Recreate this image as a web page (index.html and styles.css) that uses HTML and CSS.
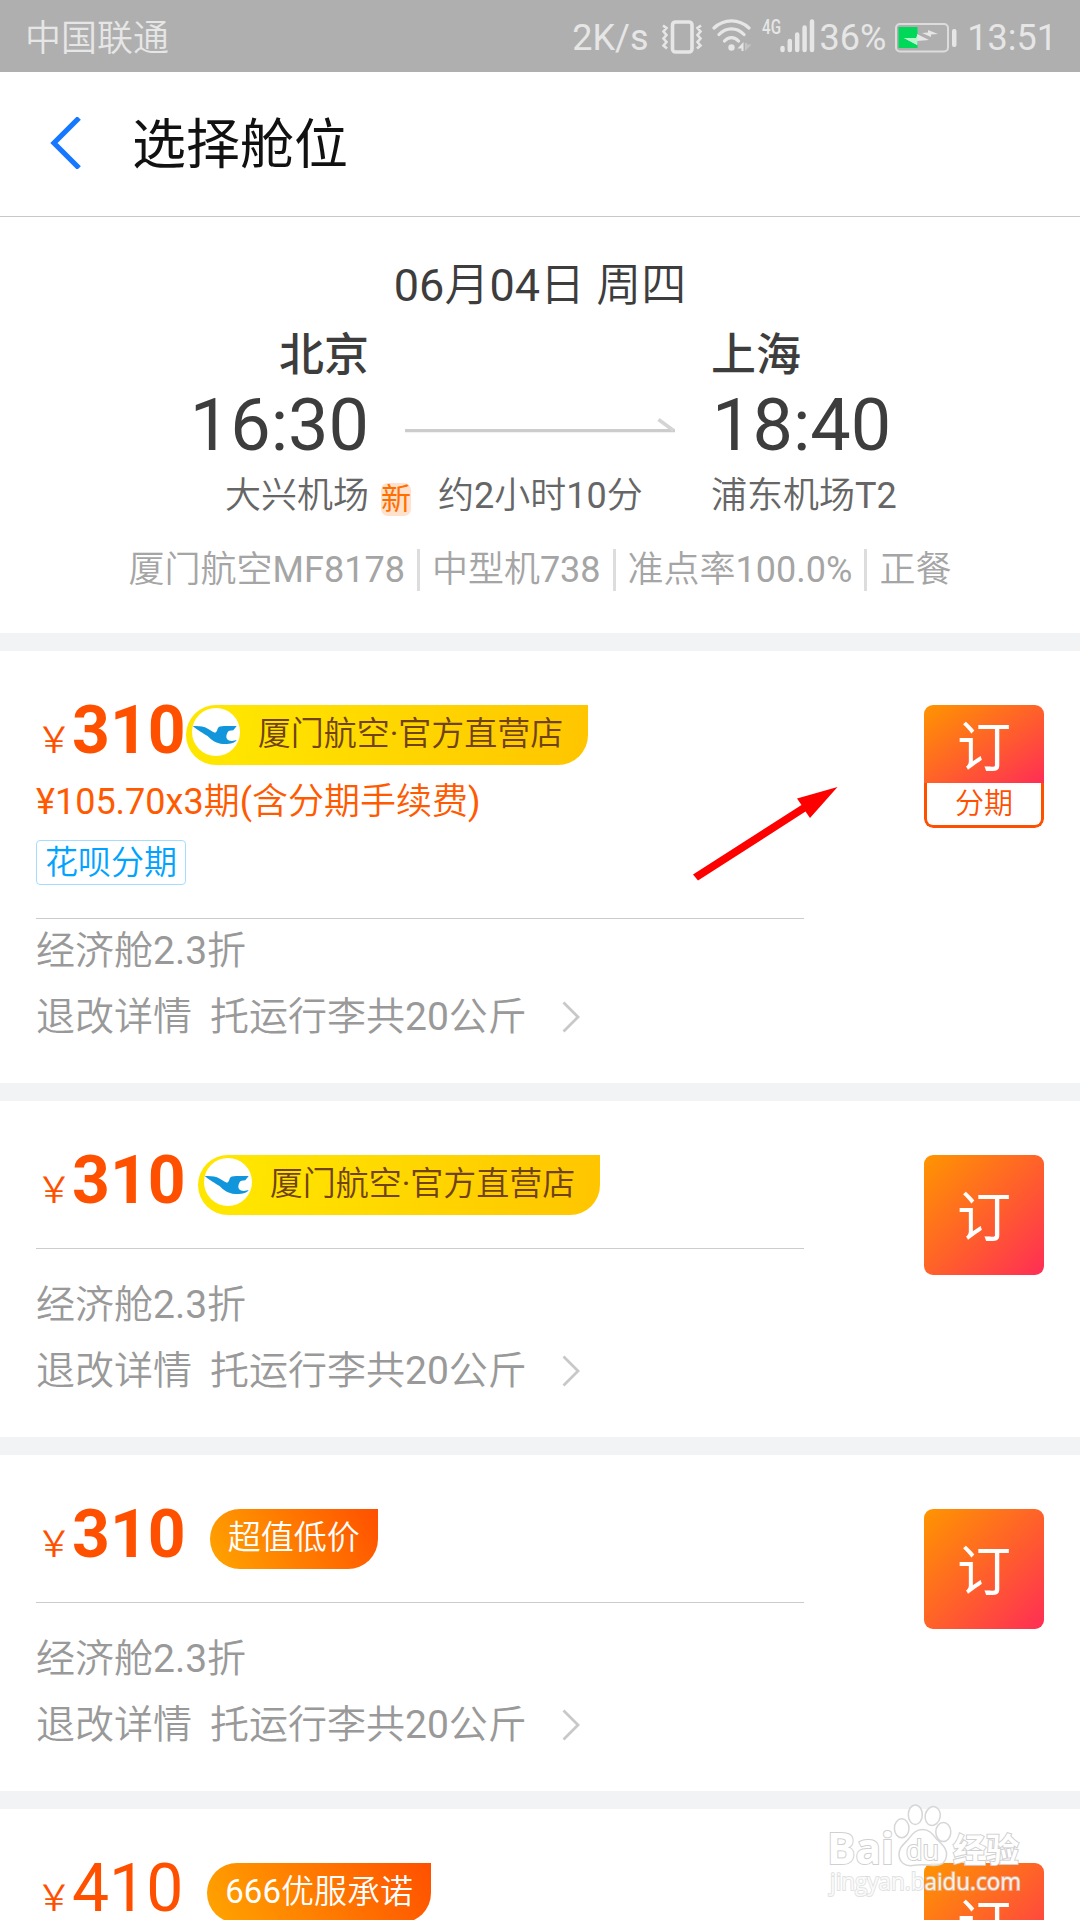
FILE: index.html
```html
<!DOCTYPE html>
<html lang="zh-CN">
<head>
<meta charset="utf-8">
<title>选择舱位</title>
<link rel="stylesheet" href="styles.css">
</head>
<body>
<svg class="defs" width="0" height="0">
  <symbol id="bird" viewBox="0 0 48 48">
    <path fill="#1296db" d="M.7 18C5 18 9 18 13 19.300C17 21 20 24 23 24.700C26 24 24.500 19.500 28 18.500C33 17.800 39 18.300 44.700 18L41.300 22.300C38 22.500 36.500 22.500 35.500 24.500C34 27.500 33.500 31 37 32.500C40 33.500 43 32.500 44.700 32C43 35 38 36.300 31 36C24 35.600 19 31.500 15.500 28C11 25 6.500 23 .7 18Z"/>
  </symbol>
  <symbol id="next" viewBox="0 0 18 32">
    <path d="M1.500 1.500L16 16L1.500 30.500" fill="none" stroke="#c8c8c8" stroke-width="2.800"/>
  </symbol>
</svg>

<header class="status">
  <span class="carrier">中国联通</span>
  <div class="status-right">
    <span class="speed">2K/s</span>
    <svg class="vibrate" width="42" height="34" viewBox="0 0 42 34" fill="none" stroke="#e6e6e6">
      <rect x="11.500" y="2" width="19.500" height="30" rx="3" stroke-width="3.600"/>
      <path d="M2 5.500L5.500 8L2.500 11.500L5.500 15L2.500 18.500L5.500 22L2.500 25.500L6 28.500M40 5.500L36.500 8L39.500 11.500L36.500 15L39.500 18.500L36.500 22L39.500 25.500L36 28.500" stroke-width="2.600"/>
    </svg>
    <svg class="wifi" width="41" height="34" viewBox="0 0 41 34" fill="none" stroke="#e6e6e6" stroke-width="3.200" stroke-linecap="round">
      <path d="M2 9C12-.5 27-.5 37 9M7 15.500C14 8 25 8 32 15.500M12.500 22C16.500 17.500 22.500 17.500 26.500 22"/>
      <circle cx="19.500" cy="28.500" r="3.200" fill="#e6e6e6" stroke="none"/>
      <path d="M25.500 29.500L31.500 23V32H29.500V29.500Z" fill="#e6e6e6" stroke="none"/>
      <path d="M33 24V32L39.500 25.500H35V24Z" fill="#c4c4c4" stroke="none"/>
    </svg>
    <span class="net">4G</span>
    <svg class="signal" width="35" height="34" viewBox="0 0 35 34" stroke="#e6e6e6" stroke-width="4.500" stroke-linecap="round">
      <path d="M2.500 29V31M9.800 22V31M17.200 15.500V31M24.600 8.500V31M32 2.500V31"/>
    </svg>
    <span class="percent">36%</span>
    <svg class="battery" width="62" height="30" viewBox="0 0 62 30">
      <rect x="1" y="1" width="52" height="27.500" rx="4" fill="none" stroke="#dcdcdc" stroke-width="2"/>
      <rect x="3.500" y="4" width="19" height="21" fill="#00d85a"/>
      <rect x="57" y="6" width="4.500" height="18" rx="2" fill="#e6e6e6"/>
      <path d="M9 15L22 22V18L34 17L22 11V15ZM27 10L36 14V11.500L43 11L33 7V9.500Z" fill="#e6e6e6"/>
      <path d="M9 15L22.500 22V11.500L21 15Z" fill="#b5f5cc"/>
    </svg>
    <span>13:51</span>
  </div>
</header>

<nav class="navbar">
  <svg width="32" height="52" viewBox="0 0 32 52"><path d="M29 1L4 26L29 51" fill="none" stroke="#1677ff" stroke-width="5.200"/></svg>
  <h1>选择舱位</h1>
</nav>

<section class="flight">
  <div class="date">06月04日 周四</div>
  <div class="route">
    <div class="city from">北京</div><div></div><div class="city">上海</div>
    <div class="time from">16:30</div>
    <svg class="line" width="270" height="16" viewBox="0 0 270 16"><path d="M0 12.700H270" stroke="#ccc" stroke-width="3.300"/><path d="M253.500 1.500L268.500 12.500" stroke="#d4d4d4" stroke-width="3.500"/></svg>
    <div class="time">18:40</div>
    <div class="place from">大兴机场</div>
    <div class="place middle"><span class="new">新</span><span>约2小时10分</span></div>
    <div class="place to">浦东机场T2</div>
  </div>
  <div class="facts"><span>厦门航空MF8178</span><span>中型机738</span><span>准点率100.0%</span><span>正餐</span></div>
</section>

<main>
  <article class="offer">
    <div class="detail">
      <div class="head">
        <div class="price"><span class="yen">￥</span>310</div>
        <div class="tag store"><svg class="logo"><use href="#bird"/></svg><span>厦门航空·官方直营店</span></div>
      </div>
      <div class="instalment">¥105.70x3期(含分期手续费)</div>
      <div class="huabei">花呗分期</div>
      <div class="terms tight">
        <div>经济舱2.3折</div>
        <div class="luggage"><span>退改详情</span><span>托运行李共20公斤</span><svg class="next"><use href="#next"/></svg></div>
      </div>
    </div>
    <div class="book split"><span class="book-main">订</span><span class="book-sub">分期</span></div>
    <svg class="pointer" width="146" height="96" viewBox="0 0 146 96"><path fill="#f00" d="M1 87.500L109.500 18L105 11.500L145.500 0L118 31L113.500 24.500L6 93.500Z"/></svg>
  </article>

  <article class="offer">
    <div class="detail">
      <div class="head">
        <div class="price"><span class="yen">￥</span>310</div>
        <div class="tag store spaced"><svg class="logo"><use href="#bird"/></svg><span>厦门航空·官方直营店</span></div>
      </div>
      <div class="terms">
        <div>经济舱2.3折</div>
        <div class="luggage"><span>退改详情</span><span>托运行李共20公斤</span><svg class="next"><use href="#next"/></svg></div>
      </div>
    </div>
    <div class="book">订</div>
  </article>

  <article class="offer">
    <div class="detail">
      <div class="head">
        <div class="price"><span class="yen">￥</span>310</div>
        <div class="tag deal">超值低价</div>
      </div>
      <div class="terms">
        <div>经济舱2.3折</div>
        <div class="luggage"><span>退改详情</span><span>托运行李共20公斤</span><svg class="next"><use href="#next"/></svg></div>
      </div>
    </div>
    <div class="book">订</div>
  </article>

  <article class="offer last">
    <div class="detail">
      <div class="head">
        <div class="price regular"><span class="yen">￥</span>410</div>
        <div class="tag deal">666优服承诺</div>
      </div>
    </div>
    <div class="book">订</div>
  </article>
</main>

<svg class="watermark" width="204" height="100" viewBox="0 0 204 100">
  <g fill="#fff" fill-opacity=".85" stroke="#d6d6d6" stroke-width="1.500">
    <ellipse cx="79.700" cy="29.300" rx="7.300" ry="9.500"/>
    <ellipse cx="93.300" cy="15.700" rx="7" ry="9.800"/>
    <ellipse cx="110.700" cy="17" rx="7.500" ry="9.500" transform="rotate(12 110.700 17)"/>
    <ellipse cx="121.300" cy="33" rx="7.500" ry="9.500"/>
    <path d="M100.500 30.500C107.500 30.500 110.500 35 114.500 40C119.500 45 125.500 49 124.500 57C123.500 65 117.500 67 110.500 66.500C103.500 65.500 97.500 65.500 90.500 66.500C82.500 67.500 77.500 63 77 56C76.500 48 82.500 45 86.500 40C90.500 35 93.500 30.500 100.500 30.500Z"/>
  </g>
  <g class="mark">
    <text x="5" y="65" font-size="43" textLength="67" lengthAdjust="spacingAndGlyphs" class="bold">Bai</text>
    <text x="84" y="61" font-size="27" textLength="33" lengthAdjust="spacingAndGlyphs">du</text>
    <text x="131" y="63" font-size="33" textLength="66" class="bold">经验</text>
  </g>
  <text class="url" x="8" y="91" font-size="23.500" textLength="191" lengthAdjust="spacingAndGlyphs">jingyan.baidu.com</text>
</svg>
</body>
</html>
```
FILE: styles.css
```css
* { box-sizing: border-box; margin: 0; padding: 0; }
body {
  position: relative;
  width: 1080px;
  height: 1920px;
  overflow: hidden;
  background: #fff;
  color: #3d3d3d;
  font-family: Roboto, "Noto Sans CJK SC DemiLight", "Noto Sans CJK SC", sans-serif;
  font-size: 36px;
  white-space: nowrap;
}
svg { display: block; flex: none; }
.defs { position: absolute; }

.status {
  display: flex;
  justify-content: space-between;
  height: 72px;
  padding: 0 23px 0 25px;
  background: #afafaf;
  color: #e6e6e6;
  line-height: 76px;
}
.carrier { line-height: 78px; }
.status-right { display: flex; align-items: flex-start; }
.vibrate { margin: 20px 0 0 12px; }
.wifi { margin: 19px 0 0 9px; }
.net { margin-left: 9px; width: 19px; font-size: 20px; font-weight: 500; line-height: 54px; transform: scaleX(.76); transform-origin: left; }
.signal { margin: 19px 0 0 -1px; }
.percent { margin-left: 5px; }
.battery { margin: 23px 10px 0 9px; }

.navbar {
  display: flex;
  align-items: center;
  gap: 50px;
  height: 145px;
  padding: 0 0 3px 50px;
  border-bottom: 1px solid #c8c8c8;
}
.navbar h1 { padding-bottom: 3px; color: #111; font: 400 54px/80px "Noto Sans CJK SC", sans-serif; }

.flight { height: 416px; padding-top: 39px; }
.date { font-size: 45px; line-height: 60px; text-align: center; }
.route { display: grid; grid-template-columns: 368px 344px 368px; margin-top: 9px; }
.from { text-align: right; }
.city { padding-bottom: 7px; font: 500 45px/53px "Noto Sans CJK SC", sans-serif; }
.city.from { margin-right: -1px; }
.city:not(.from) { text-indent: -1px; }
.time { font-size: 72px; line-height: 82px; }
.time.from { margin-right: -1px; }
.line { margin: 33px 0 0 37px; }
.place { padding-top: 5px; color: #666; line-height: 48px; }
.place.from { margin-right: -1px; }
.place.to { text-indent: -1px; }
.middle { display: flex; align-items: flex-start; }
.new {
  width: 30px;
  height: 33px;
  margin: 11px 27px 0 13px;
  border-radius: 7px;
  background: #ffe1cc;
  color: #ff6f00;
  font: 400 30px/26px "Noto Sans CJK SC", sans-serif;
}
.facts { display: flex; justify-content: center; margin-top: 29px; color: #a5a5a5; line-height: 42px; }
.facts span + span { margin-left: 12px; padding-left: 12px; border-left: 3px solid #ddd; }

.offer {
  position: relative;
  display: flex;
  justify-content: space-between;
  align-items: flex-start;
  padding: 54px 36px 37px;
  border-top: 18px solid #f1f3f5;
}
.offer.last { height: 129px; padding-bottom: 0; overflow: hidden; }
.detail { width: 768px; }
.head { display: flex; height: 60px; }
.price { color: #ff5000; font-size: 66px; font-weight: 700; line-height: 51px; }
.price.regular { font-weight: 400; }
.yen { font-size: 36px; font-weight: 400; }
.tag { height: 60px; border-radius: 30px 0 30px 30px; font-size: 33px; line-height: 58px; }
.store {
  display: flex;
  width: 402px;
  padding-left: 6px;
  background: linear-gradient(100deg, #ffe600 10%, #ffc500);
  color: #704214;
}
.store.spaced { margin-left: 12px; }
.logo { width: 48px; height: 48px; margin: 3px 18px 0 0; border-radius: 50%; background: #fff; }
.deal { margin-left: 24px; padding: 0 18px; background: linear-gradient(60deg, #ffa500, #ff5000); color: #fff; }
.instalment { margin-top: 13px; color: #ff5a00; line-height: 48px; }
.huabei {
  width: 150px;
  height: 45px;
  margin-top: 14px;
  padding-left: 8px;
  border: 1px solid #a5dcff;
  border-radius: 4px;
  color: #00a3ff;
  font-size: 33px;
  line-height: 43px;
}
.terms {
  display: grid;
  gap: 6px;
  margin: 33px 0 -1px;
  padding-top: 26px;
  border-top: 1px solid #ccc;
  color: #999;
  font-size: 39px;
  line-height: 60px;
}
.terms.tight { padding-top: 2px; }
.luggage { display: flex; align-items: center; gap: 18px; }
.next { width: 18px; height: 32px; margin: -1px 0 0 17px; }

.book {
  width: 120px;
  height: 120px;
  border-radius: 9px;
  background: linear-gradient(135deg, #ff9500, #ff5d2d 55%, #ff2d55);
  color: #fff;
  font: 400 54px/118px "Noto Sans CJK SC", sans-serif;
  text-align: center;
}
.split {
  display: flex;
  flex-direction: column;
  height: 123px;
  overflow: hidden;
  background: #fff;
}
.book-main { height: 78px; background: linear-gradient(146deg, #ff9500, #ff5d2d 55%, #ff2d55); line-height: 77px; }
.book-sub {
  height: 45px;
  border: 3px solid #ff5000;
  border-top: 0;
  border-radius: 0 0 9px 9px;
  color: #ff5000;
  font: 400 29px/36px "Noto Sans CJK SC DemiLight", "Noto Sans CJK SC", sans-serif;
}
.pointer { position: absolute; left: 692px; top: 136px; }

.watermark { position: absolute; left: 822px; top: 1799px; }
.mark { fill: #fff; stroke: #d0d0d0; stroke-width: 2px; paint-order: stroke; font-family: "Open Sans", "Noto Sans CJK SC", sans-serif; }
.bold { font-weight: 700; }
.url { fill: #fff; fill-opacity: .85; stroke: #cfcfcf; stroke-opacity: .6; stroke-width: 2px; paint-order: stroke; font-family: "Open Sans", sans-serif; }
```
